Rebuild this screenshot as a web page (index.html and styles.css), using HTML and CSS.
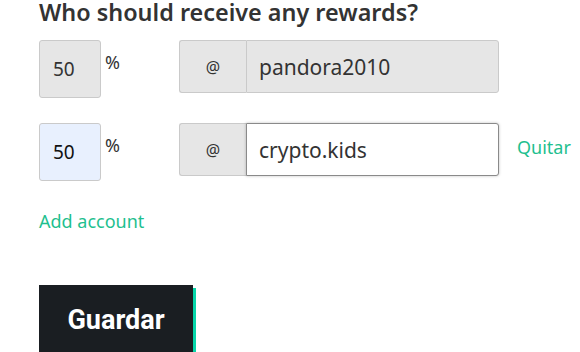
FILE: index.html
```html
<!DOCTYPE html>
<html lang="en">
<head>
  <meta charset="UTF-8" />
  <title>Beneficiaries</title>
  <link rel="stylesheet" href="styles.css">
</head>
<body>
  <div class="beneficiaries">
    <h2 class="title">Who should receive any rewards?</h2>

    <!-- Fixed author row -->
    <div class="row">
      <div class="pct">
        <input class="pct-input" type="text" value="50" readonly>
        <span class="pct-sign">%</span>
      </div>
      <div class="account-group">
        <span class="addon">@</span>
        <input class="account-input" type="text" value="pandora2010" readonly>
      </div>
    </div>

    <!-- Editable row -->
    <div class="row">
      <div class="pct">
        <input class="pct-input filled" type="text" value="50">
        <span class="pct-sign">%</span>
      </div>
      <div class="account-group">
        <span class="addon">@</span>
        <input class="account-input active" type="text" value="crypto.kids">
      </div>
      <a href="#" class="remove-link">Quitar</a>
    </div>

    <a href="#" class="add-link">Add account</a>

    <button class="save-btn">Guardar</button>
  </div>
</body>
</html>
```

FILE: styles.css
```css
:root {
  --green: #1fbf8f;
  --text: #333333;
  --border: #cacaca;
  --disabled: #e6e6e6;
  --dark: #1a1e22;
}

* {
  margin: 0;
  padding: 0;
  box-sizing: border-box;
}

body {
  font-family: 'Noto Sans', sans-serif;
  color: var(--text);
  background: #fff;
}

.beneficiaries {
  padding-left: 39px;
  display: flex;
  flex-direction: column;
  align-items: flex-start;
}

.title {
  font-size: 23.4px;
  font-weight: 600;
  line-height: 24px;
  margin-bottom: 16px;
  color: #333;
  white-space: nowrap;
}

/* Rows */
.row {
  display: flex;
  align-items: flex-start;
  margin-bottom: 25px;
}

.pct {
  width: 140px;
  display: flex;
  align-items: flex-start;
}

.pct-input {
  width: 62px;
  height: 58px;
  border: 1px solid var(--border);
  border-radius: 3px;
  background: var(--disabled);
  font-family: inherit;
  font-size: 19px;
  color: var(--text);
  padding-left: 13px;
  outline: none;
}

.pct-input.filled {
  background: #e8f0fe;
  color: #111;
}

.pct-sign {
  font-size: 18px;
  margin-left: 4px;
  margin-top: 10px;
}

/* Account input group */
.account-group {
  display: flex;
  width: 320px;
  height: 53px;
}

.addon {
  width: 67px;
  display: flex;
  align-items: center;
  justify-content: center;
  background: var(--disabled);
  border: 1px solid var(--border);
  border-right: none;
  border-radius: 3px 0 0 3px;
  font-size: 16px;
}

.account-input {
  flex: 1;
  min-width: 0;
  border: 1px solid var(--border);
  border-radius: 0 3px 3px 0;
  background: var(--disabled);
  font-family: inherit;
  font-size: 21px;
  color: var(--text);
  padding-left: 12px;
  outline: none;
}

.account-input.active {
  background: #fff;
  border-color: #8a8a8a;
  box-shadow: 0 0 3px rgba(0, 0, 0, 0.25);
}

.remove-link {
  margin-left: 18px;
  margin-top: 12px;
  color: var(--green);
  text-decoration: none;
  font-size: 18px;
}

.add-link {
  color: var(--green);
  text-decoration: none;
  font-size: 18px;
  margin-top: 3px;
}

/* Save button */
.save-btn {
  margin-top: 52px;
  width: 154px;
  height: 70px;
  background: var(--dark);
  color: #fff;
  border: none;
  font-family: 'Roboto', sans-serif;
  font-weight: 700;
  font-size: 27px;
  box-shadow: 3px 3px 0 0 #06d6a9;
  cursor: pointer;
}
```
